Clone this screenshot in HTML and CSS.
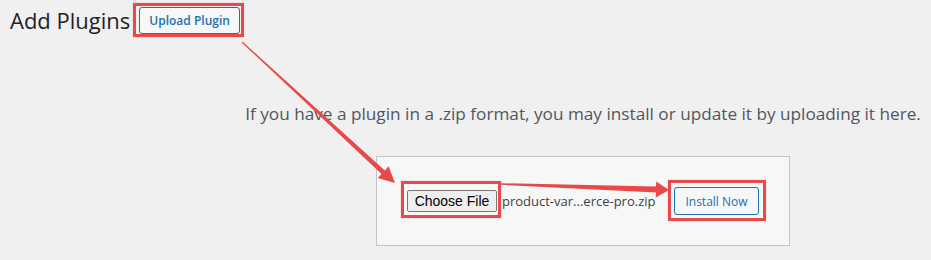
FILE: index.html
```html
<!DOCTYPE html>
<html lang="en">
<head>
    <meta charset="UTF-8">
    <meta name="viewport" content="width=device-width, initial-scale=1.0">
    <title>Add Plugins</title>
    <link rel="stylesheet" href="styles.css">
</head>
<body>
    <div class="page">
        <div class="title-row">
            <h1>Add Plugins</h1>
            <a class="upload-btn marked">Upload Plugin</a>
        </div>

        <div class="upload-plugin">
            <p class="install-help">If you have a plugin in a .zip format, you may install or update it by uploading it here.</p>
            <form class="upload-form">
                <span class="file-btn marked">Choose File</span>
                <span class="file-name">product-var...erce-pro.zip</span>
                <button type="button" class="install-btn marked">Install Now</button>
            </form>
        </div>

        <!-- annotation arrows -->
        <svg class="arrows" width="931" height="260" viewBox="0 0 931 260">
            <polygon points="241.6,42.4 381.5,174 377.8,177.9 395,183 388.6,166.3 384.9,170.4 242.4,41.6" />
            <polygon points="500,184.8 656.1,192.5 655.7,197.5 669,190 656.3,181.5 655.9,186.5 500,183.2" />
        </svg>
    </div>
</body>
</html>
```

FILE: styles.css
```css
html, body {
    margin: 0;
    overflow: hidden;
}
body {
    background-color: #f0f0f1;
    font-family: "Open Sans", sans-serif;
    color: #3c434a;
}
.page {
    position: relative;
    width: 931px;
    height: 260px;
}
.title-row {
    display: flex;
    align-items: center;
    padding: 7px 0 0 10px;
}
h1 {
    margin: 0;
    font-size: 22px;
    font-weight: 400;
    color: #1d2327;
    line-height: 27px;
}
.upload-btn {
    margin-left: 9px;
    padding: 0 9px;
    height: 25px;
    line-height: 25px;
    border: 1px solid #2271b1;
    border-radius: 3px;
    background-color: #f6f7f7;
    color: #2271b1;
    font-size: 12px;
    font-weight: 600;
}
.marked {
    position: relative;
}
.marked::after {
    content: "";
    position: absolute;
    border: 3px solid #e8494b;
    box-shadow: 0 0 1px rgba(232, 73, 75, 0.5);
    pointer-events: none;
}
.upload-btn::after {
    top: -5px;
    left: -7px;
    right: -5px;
    bottom: -4px;
}
.upload-plugin {
    box-sizing: border-box;
    width: 931px;
    padding-left: 235px;
    text-align: center;
}
.install-help {
    margin: 0;
    padding-top: 67px;
    font-size: 17.2px;
    line-height: 26px;
    color: #50575e;
}
.upload-form {
    display: inline-flex;
    align-items: center;
    margin-top: 29px;
    padding: 30px;
    border: 1px solid #c3c4c7;
    background-color: #f6f7f7;
}
.file-btn {
    box-sizing: border-box;
    width: 90px;
    height: 22px;
    line-height: 20px;
    border: 1px solid #767676;
    border-radius: 2px;
    background-color: #efefef;
    color: #000;
    font-family: "Liberation Sans", Arial, sans-serif;
    font-size: 14px;
}
.file-btn::after {
    top: -10px;
    left: -7px;
    right: -5px;
    bottom: -7px;
}
.file-name {
    width: 156px;
    margin-left: 5px;
    text-align: left;
    font-size: 13px;
    color: #3c434a;
    white-space: nowrap;
}
.install-btn {
    box-sizing: border-box;
    width: 85px;
    height: 28px;
    margin-left: 16px;
    padding: 0;
    border: 1px solid #2271b1;
    border-radius: 3px;
    background-color: #f6f7f7;
    color: #2271b1;
    font-family: "Open Sans", sans-serif;
    font-size: 12px;
}
.install-btn::after {
    top: -8px;
    left: -7px;
    right: -8px;
    bottom: -7px;
}
.arrows {
    position: absolute;
    top: 0;
    left: 0;
    pointer-events: none;
}
.arrows polygon {
    fill: #e8494b;
}
```
